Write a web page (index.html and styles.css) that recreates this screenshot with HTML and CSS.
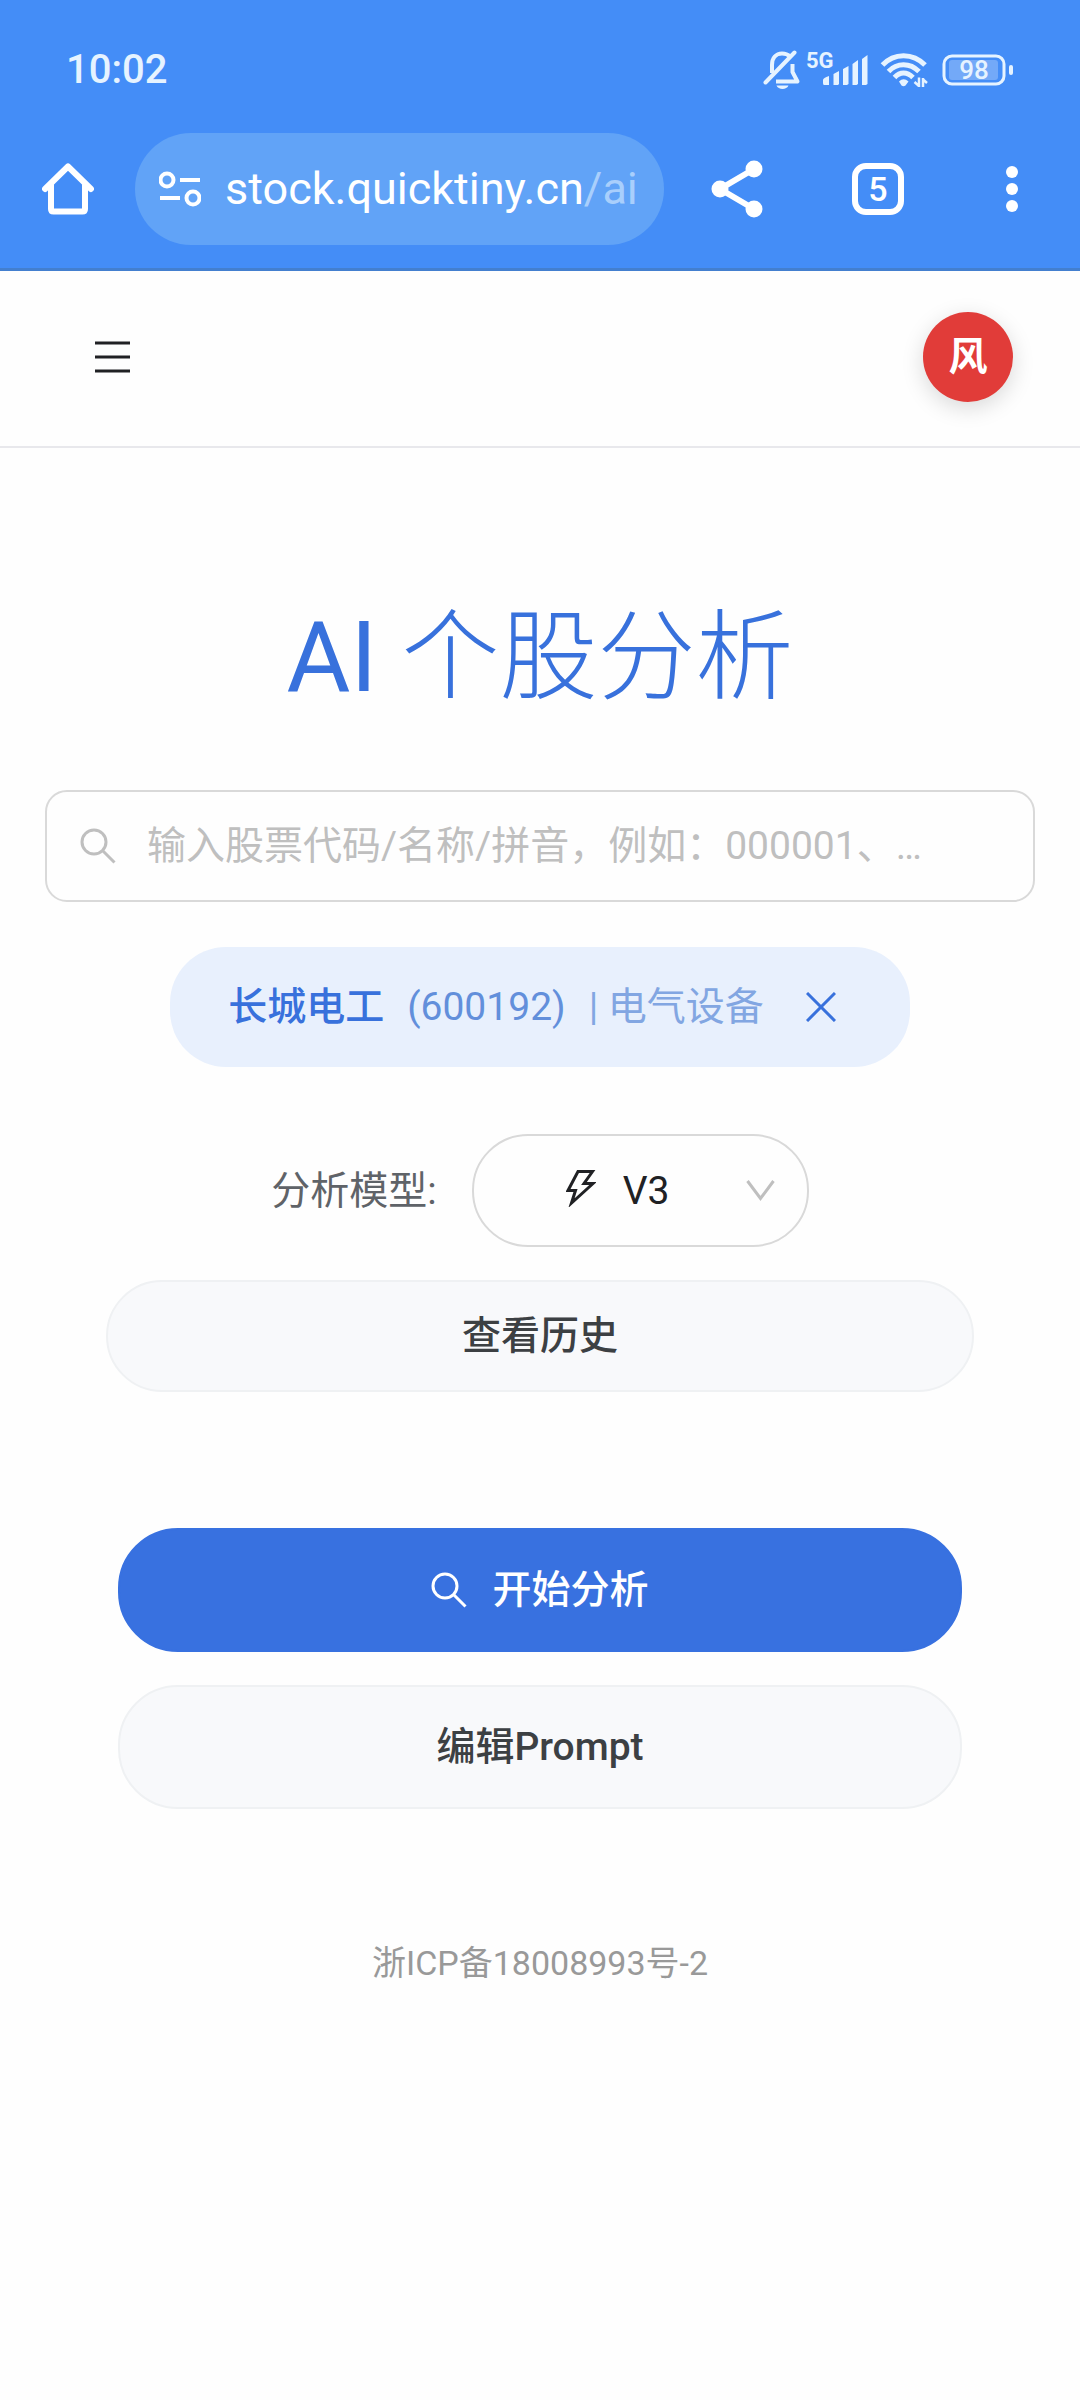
FILE: index.html
```
<!DOCTYPE html>
<html lang="zh-CN">
<head>
    <meta charset="UTF-8">
    <meta name="viewport" content="width=device-width, initial-scale=1.0">
    <title>AI 个股分析</title>
    <link rel="stylesheet" href="styles.css">
</head>
<body>
    <div class="browser">
        <!-- Status bar -->
        <div class="status-bar">
            <span class="time">10:02</span>
            <div class="status-icons">
                <svg class="bell" width="40" height="40" viewBox="0 0 40 40" fill="none" stroke="currentColor" stroke-width="4">
                    <path d="M9 23V15C9 8 13 3.500 19 3.500C22 3.500 25 4.500 27 6.500M29.500 14V22L34.500 31.500H13" stroke-linejoin="round"/>
                    <path d="M2.500 32.500L31.500 2.500" stroke-linecap="round"/>
                    <path d="M13.500 35.500H25.500C24 40 15 40 13.500 35.500Z" fill="currentColor" stroke="none"/>
                </svg>
                <div class="network">
                    <span class="network-type">5G</span>
                    <svg width="46" height="30" viewBox="0 0 46 30" fill="currentColor">
                        <path d="M0 25Q0 23 6 21V30H1Q0 30 0 28ZM10.500 19L16 16V29L15 30H10.500ZM20 14L25.500 11V29L24 30H20ZM29.500 9L35 5V29L33.500 30H29.500ZM39 4L44.500 0V29L43 30H39Z"/>
                    </svg>
                </div>
                <svg class="wifi" width="48" height="38" viewBox="0 0 48 38" fill="none" stroke="currentColor" stroke-width="5">
                    <path d="M2.500 14C14 1.500 33 1.500 45 14M8.500 20.500C17 11.500 30 11.500 39 20.500M14.500 26.500C20 20.500 27 20.500 33 26.500"/>
                    <path d="M19 30.500Q23.500 26 28.500 30.500L25.500 34.500Q23.500 36 21.500 34.500Z" fill="currentColor" stroke="none"/>
                    <path d="M39 26.500V36M39 35L34.500 31M43 36V27M42.500 28L47 32" stroke-width="2.500"/>
                </svg>
                <svg class="battery" width="72" height="32" viewBox="0 0 72 32">
                    <rect x="2" y="2" width="60" height="28" rx="8" fill="none" stroke="currentColor" stroke-width="3"/>
                    <rect x="7" y="6" width="49" height="20" rx="3" fill="#73a9f8"/>
                    <rect x="67" y="11" width="4" height="10" rx="2" fill="currentColor"/>
                    <text x="32" y="25" text-anchor="middle" class="battery-level">98</text>
                </svg>
            </div>
        </div>

        <!-- Address bar -->
        <div class="toolbar">
            <button class="icon-btn" aria-label="主页">
                <svg width="52" height="52" viewBox="0 0 52 52" fill="none" stroke="currentColor" stroke-width="6" stroke-linejoin="round" stroke-linecap="round">
                    <path d="M3 26L26 3.500L49 26"/>
                    <path d="M9 22V46Q9 48.500 11.500 48.500H40.500Q43 48.500 43 46V22"/>
                </svg>
            </button>
            <div class="address">
                <svg width="42" height="36" viewBox="0 0 42 36" fill="none" stroke="currentColor" stroke-width="4">
                    <circle cx="8" cy="9" r="6.500"/>
                    <path d="M21 9H41M1 27H21"/>
                    <circle cx="34" cy="27" r="6.500"/>
                </svg>
                <span class="url">stock.quicktiny.cn<span class="path">/ai</span></span>
            </div>
            <button class="icon-btn share" aria-label="分享">
                <svg width="52" height="58" viewBox="0 0 52 58" fill="currentColor">
                    <path d="M43 9L9 29L43 49" fill="none" stroke="currentColor" stroke-width="6"/>
                    <circle cx="43" cy="9" r="8.500"/>
                    <circle cx="9" cy="29" r="8.500"/>
                    <circle cx="43" cy="49" r="8.500"/>
                </svg>
            </button>
            <button class="tabs" aria-label="标签页">5</button>
            <button class="icon-btn" aria-label="更多">
                <svg width="12" height="46" viewBox="0 0 12 46" fill="currentColor">
                    <circle cx="6" cy="6" r="6"/>
                    <circle cx="6" cy="23" r="6"/>
                    <circle cx="6" cy="40" r="6"/>
                </svg>
            </button>
        </div>
    </div>

    <header>
        <button class="menu-btn" aria-label="菜单">
            <svg width="35" height="32" viewBox="0 0 35 32" stroke="currentColor" stroke-width="3">
                <path d="M0 2H35M0 16H35M0 30H35"/>
            </svg>
        </button>
        <button class="avatar">风</button>
    </header>

    <main>
        <h1>AI <span>个股分析</span></h1>

        <div class="search">
            <svg width="36" height="36" viewBox="0 0 36 36" fill="none" stroke="currentColor" stroke-width="3">
                <circle cx="14" cy="14" r="12"/>
                <path d="M22.500 22.500L34.500 34.500"/>
            </svg>
            <input type="text" aria-label="股票" placeholder="输入股票代码/名称/拼音，例如：000001、…">
        </div>

        <div class="stock-tag">
            <span class="stock-name">长城电工</span>
            <span class="stock-code">(600192)</span>
            <span class="stock-industry">| 电气设备</span>
            <button class="close-btn" aria-label="移除">
                <svg width="30" height="30" viewBox="0 0 30 30" stroke="currentColor" stroke-width="3">
                    <path d="M1 1L29 29M29 1L1 29"/>
                </svg>
            </button>
        </div>

        <div class="model-row">
            <label for="model">分析模型:</label>
            <div class="model-select">
                <svg class="bolt" width="30" height="37" viewBox="0 0 30 37" fill="none" stroke="currentColor" stroke-width="3">
                    <path d="M12 1.500H26.500L18 13.500H27L5.500 33L9.500 20.500H2Z"/>
                </svg>
                <select id="model">
                    <option>V3</option>
                </select>
                <svg class="arrow" width="29" height="22" viewBox="0 0 29 22" fill="none" stroke="currentColor" stroke-width="3">
                    <path d="M1.500 1L14.500 18.500L27.500 1"/>
                </svg>
            </div>
        </div>

        <div class="history">
            <button class="btn">查看历史</button>
        </div>

        <div class="actions">
            <button class="btn btn-primary">
                <svg width="36" height="36" viewBox="0 0 36 36" fill="none" stroke="currentColor" stroke-width="3">
                    <circle cx="14" cy="14" r="12"/>
                    <path d="M22.500 22.500L34.500 34.500"/>
                </svg>
                开始分析
            </button>
            <button class="btn">编辑Prompt</button>
        </div>
    </main>

    <footer>
        <a href="#">浙ICP备18008993号-2</a>
    </footer>
</body>
</html>
```
FILE: styles.css
```
* {
    box-sizing: border-box;
}

body {
    margin: 0;
    background-color: #fefefe;
    color: #202124;
    font-family: Roboto, "Noto Sans CJK SC", sans-serif;
    font-size: 39px;
    line-height: 60px;
}

button, input, select {
    font: inherit;
    color: inherit;
    background: none;
    border: none;
    padding: 0;
    margin: 0;
}

button {
    cursor: pointer;
}

svg {
    display: block;
    flex-shrink: 0;
}

/* Browser bars */
.browser {
    background-color: #448df7;
    border-bottom: 3px solid #437fcf;
    color: #ffffff;
}

.status-bar {
    display: flex;
    justify-content: space-between;
    align-items: center;
    height: 133px;
    padding: 6px 66px 0 66px;
    color: #e6f3ff;
}

.time {
    font-size: 40px;
    font-weight: 500;
}

.status-icons {
    display: flex;
    align-items: center;
}

.network {
    position: relative;
    margin: 0 11px 0 20px;
}

.network-type {
    position: absolute;
    left: -17px;
    top: -6px;
    font-size: 22px;
    line-height: 24px;
    font-weight: 700;
}

.battery {
    margin-left: 14px;
}

.battery-level {
    font-size: 26px;
    font-weight: 500;
    fill: currentColor;
}

.toolbar {
    display: flex;
    align-items: center;
    padding: 0 62px 23px 42px;
}

.address {
    flex: 1;
    min-width: 0;
    display: flex;
    align-items: center;
    gap: 24px;
    height: 112px;
    margin: 0 47px 0 41px;
    padding: 0 24px;
    border-radius: 56px;
    background-color: #61a3f7;
}

.url {
    font-size: 45px;
    white-space: nowrap;
}

.url .path {
    color: #a9cffc;
}

.tabs {
    flex-shrink: 0;
    width: 52px;
    height: 52px;
    margin: 0 102px 0 89px;
    border: 6px solid #ffffff;
    border-radius: 14px;
    font-size: 34px;
    line-height: 40px;
    font-weight: 500;
}

/* Page header */
header {
    display: flex;
    justify-content: space-between;
    align-items: center;
    height: 177px;
    padding: 0 67px 4px 95px;
    border-bottom: 2px solid #e8e8ec;
}

.avatar {
    width: 90px;
    height: 90px;
    border-radius: 50%;
    background-color: #e13c39;
    color: #ffffff;
    font-weight: 700;
    box-shadow: 0 6px 22px rgba(0, 0, 0, 0.15);
}

main {
    padding: 144px 45px 0;
}

h1 {
    margin: 0 0 66px;
    color: #3871dc;
    font-size: 98px;
    font-weight: 400;
    line-height: 132px;
    text-align: center;
}

h1 span {
    font-weight: 300;
}

/* Stock search */
.search {
    display: flex;
    align-items: center;
    gap: 31px;
    height: 112px;
    padding: 0 33px;
    border: 2px solid #d9d9d9;
    border-radius: 22px;
    color: #bfbfbf;
}

.search input {
    flex: 1;
    min-width: 0;
    outline: none;
}

.search input::placeholder {
    color: #bfbfbf;
    opacity: 1;
}

.stock-tag {
    display: flex;
    align-items: center;
    width: fit-content;
    height: 120px;
    margin: 45px auto 67px;
    padding: 0 74px 0 58px;
    border-radius: 56px;
    background-color: #e8f0fd;
    color: #3871dc;
}

.stock-name {
    font-weight: 500;
}

.stock-code {
    margin: 0 23px;
    color: #628fdb;
}

.stock-industry {
    color: #82a6e2;
}

.close-btn {
    margin-left: 42px;
}

/* Model select */
.model-row {
    display: flex;
    justify-content: center;
    align-items: center;
    gap: 35px;
    margin-bottom: 33px;
}

.model-row label {
    color: #5f6368;
}

.model-select {
    position: relative;
    width: 337px;
}

.model-select select {
    display: block;
    width: 100%;
    height: 113px;
    padding-left: 149px;
    border: 2px solid #d9d9d9;
    border-radius: 56px;
    appearance: none;
}

.bolt, .arrow {
    position: absolute;
    top: 36px;
    left: 94px;
    pointer-events: none;
}

.arrow {
    top: 46px;
    left: auto;
    right: 34px;
    color: #bfbfbf;
}

/* Buttons */
.btn {
    display: flex;
    justify-content: center;
    align-items: center;
    gap: 25px;
    width: 100%;
    height: 124px;
    border: 2px solid #eff1f3;
    border-radius: 60px;
    background-color: #f8f9fb;
    color: #3c4043;
    font-weight: 500;
}

.history {
    padding: 0 61px;
    margin-bottom: 136px;
}

.history .btn {
    height: 112px;
}

.actions {
    display: grid;
    gap: 33px;
    padding: 0 73px;
}

.btn-primary {
    border-color: #3871e0;
    background-color: #3871e0;
    color: #ffffff;
}

footer {
    margin: 124px 0 60px;
    text-align: center;
    font-size: 34px;
}

footer a {
    color: #999999;
    text-decoration: none;
}
```
